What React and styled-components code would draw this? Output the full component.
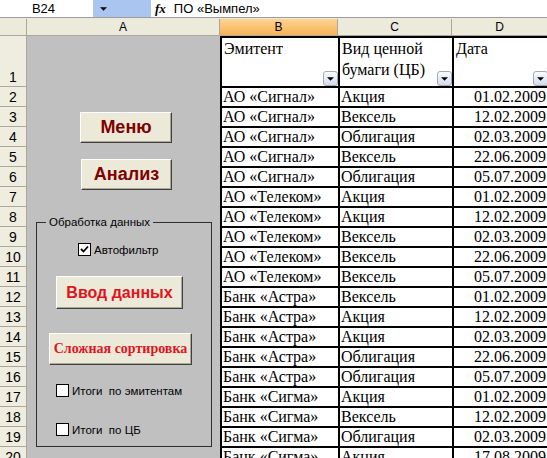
import React from 'react';
import styled, { createGlobalStyle } from 'styled-components';

const GlobalStyle = createGlobalStyle`
  html, body {
    margin: 0;
    padding: 0;
    background: #ffffff;
    overflow: hidden;
  }
  body {
    font-family: "Liberation Sans", Arial, sans-serif;
  }
`;

const Window = styled.div`
  width: 547px;
  height: 458px;
  overflow: hidden;
  background: #ece9d8;
`;

const FormulaBar = styled.div`
  display: flex;
  align-items: center;
  height: 17px;
  background: #ffffff;
  border-bottom: 1px solid #9d9da1;
  margin-bottom: 1px;
  font-size: 13px;
  color: #000;
`;

const NameBox = styled.div`
  width: 93px;
  height: 17px;
  display: flex;
  align-items: center;
  justify-content: center;
  padding-right: 6px;
  box-sizing: border-box;
`;

const NameDrop = styled.div`
  width: 58px;
  height: 17px;
  background: #a9c5f0;
  display: flex;
  align-items: center;
  padding-left: 7px;
  box-sizing: border-box;
`;

const Fx = styled.span`
  font-family: "Liberation Serif", "Times New Roman", serif;
  font-style: italic;
  font-weight: bold;
  font-size: 13px;
  margin: 0 8px 0 4px;
`;

const ColumnHeaders = styled.div`
  display: flex;
  height: 16px;
  border-bottom: 1px solid #aca899;
  background: #ebeadb;
`;

const ColHead = styled.div`
  width: ${(p) => p.$w}px;
  flex: none;
  box-sizing: border-box;
  border-right: 1px solid #aca899;
  display: flex;
  align-items: center;
  justify-content: center;
  font-size: 12px;
  color: #000;
  background: ${(p) => (p.$active ? 'linear-gradient(#fcd494, #f8b256)' : 'transparent')};
`;

const Body = styled.div`
  display: flex;
  height: 422px;
  overflow: hidden;
`;

const RowHeaders = styled.div`
  width: 27px;
  flex: none;
  display: flex;
  flex-direction: column;
  background: #efeddf;
  border-right: 1px solid #aca899;
  box-sizing: border-box;
`;

const RowNum = styled.div`
  height: ${(p) => p.$h}px;
  flex: none;
  box-sizing: border-box;
  border-bottom: 1px solid #aca899;
  display: flex;
  align-items: flex-end;
  justify-content: center;
  font-size: 14px;
  line-height: 18px;
  color: #000;
`;

const Panel = styled.div`
  width: 193px;
  flex: none;
  background: #c0c0c0;
  display: flex;
  flex-direction: column;
  align-items: flex-start;
`;

const Button = styled.div`
  width: ${(p) => p.$w}px;
  height: ${(p) => p.$h}px;
  margin: ${(p) => p.$mt}px 0 0 ${(p) => p.$ml}px;
  box-sizing: border-box;
  background: #ece9d8;
  border: 1px solid;
  border-color: #ffffff #404040 #404040 #ffffff;
  box-shadow: inset -1px -1px 0 #aca899;
  display: flex;
  align-items: center;
  justify-content: center;
  font-weight: bold;
  font-family: ${(p) => (p.$serif ? '"Liberation Serif", "Times New Roman", serif' : '"Liberation Sans", Arial, sans-serif')};
  font-size: ${(p) => p.$size}px;
  color: ${(p) => p.$color};
  white-space: nowrap;
`;

const Frame = styled.div`
  position: relative;
  width: 176px;
  height: 225px;
  margin: 32px 0 0 9px;
  box-sizing: border-box;
  border: 1px solid #303030;
  display: flex;
  flex-direction: column;
  align-items: flex-start;
`;

const Legend = styled.span`
  position: absolute;
  top: -8px;
  left: 9px;
  padding: 0 3px;
  background: #c0c0c0;
  font-size: 11.5px;
  line-height: 14px;
  color: #000;
`;

const CheckRow = styled.div`
  display: flex;
  align-items: center;
  margin: ${(p) => p.$mt}px 0 0 ${(p) => p.$ml}px;
  font-size: 11.5px;
  color: #000;
  white-space: pre;
`;

const Box = styled.div`
  width: 13px;
  height: 13px;
  box-sizing: border-box;
  background: #ffffff;
  border: 1px solid #000;
  margin-right: 3px;
  display: flex;
  align-items: center;
  justify-content: center;
`;

const Table = styled.div`
  display: grid;
  grid-template-columns: 118px 114px 96px;
  grid-template-rows: 50px;
  grid-auto-rows: 20px;
  border-top: 2px solid #000;
  border-left: 2px solid #000;
  background: #ffffff;
  align-self: flex-start;
`;

const Cell = styled.div`
  position: relative;
  box-sizing: border-box;
  border-right: 2px solid #000;
  border-bottom: 2px solid #000;
  font-family: "Liberation Serif", "Times New Roman", serif;
  font-size: 16px;
  line-height: 18px;
  color: #000;
  white-space: nowrap;
  overflow: hidden;
  display: flex;
  align-items: flex-end;
  justify-content: ${(p) => (p.$right ? 'flex-end' : 'flex-start')};
  padding: 0 2px 0 1px;
`;

const HeadCell = styled(Cell)`
  align-items: flex-start;
  white-space: normal;
  line-height: 21px;
  padding: 0 2px 0 2px;
  overflow: visible;
`;

const FilterBtn = styled.div`
  position: absolute;
  right: 0;
  bottom: 0;
  width: 15px;
  height: 15px;
  box-sizing: border-box;
  border: 1px solid #a3aab8;
  border-radius: 3px;
  background: linear-gradient(#fbfcfe, #d4dceb);
  display: flex;
  align-items: center;
  justify-content: center;
`;

const rows = [
  ['АО «Сигнал»', 'Акция', '01.02.2009'],
  ['АО «Сигнал»', 'Вексель', '12.02.2009'],
  ['АО «Сигнал»', 'Облигация', '02.03.2009'],
  ['АО «Сигнал»', 'Вексель', '22.06.2009'],
  ['АО «Сигнал»', 'Облигация', '05.07.2009'],
  ['АО «Телеком»', 'Акция', '01.02.2009'],
  ['АО «Телеком»', 'Акция', '12.02.2009'],
  ['АО «Телеком»', 'Вексель', '02.03.2009'],
  ['АО «Телеком»', 'Вексель', '22.06.2009'],
  ['АО «Телеком»', 'Вексель', '05.07.2009'],
  ['Банк «Астра»', 'Вексель', '01.02.2009'],
  ['Банк «Астра»', 'Акция', '12.02.2009'],
  ['Банк «Астра»', 'Акция', '02.03.2009'],
  ['Банк «Астра»', 'Облигация', '22.06.2009'],
  ['Банк «Астра»', 'Облигация', '05.07.2009'],
  ['Банк «Сигма»', 'Акция', '01.02.2009'],
  ['Банк «Сигма»', 'Вексель', '12.02.2009'],
  ['Банк «Сигма»', 'Облигация', '02.03.2009'],
  ['Банк «Сигма»', 'Акция', '17.08.2009'],
];

const Arrow = ({ size = 7 }) => (
  <svg width={size} height={Math.ceil(size / 2)} viewBox="0 0 8 4">
    <path d="M0 0 L8 0 L4 4 Z" fill="#000" />
  </svg>
);

const Check = () => (
  <svg width="9" height="9" viewBox="0 0 9 9">
    <path d="M1 4 L3.5 6.5 L8 1.5" stroke="#000" strokeWidth="1.8" fill="none" />
  </svg>
);

const Filter = () => (
  <FilterBtn>
    <Arrow />
  </FilterBtn>
);

export default function App() {
  return (
    <>
      <GlobalStyle />
      <Window>
        <FormulaBar>
          <NameBox>B24</NameBox>
          <NameDrop>
            <Arrow />
          </NameDrop>
          <Fx>fx</Fx>
          <span>ПО «Вымпел»</span>
        </FormulaBar>

        <ColumnHeaders>
          <ColHead $w={27} />
          <ColHead $w={193}>A</ColHead>
          <ColHead $w={118} $active>B</ColHead>
          <ColHead $w={114}>C</ColHead>
          <ColHead $w={96}>D</ColHead>
        </ColumnHeaders>

        <Body>
          <RowHeaders>
            <RowNum $h={51}>1</RowNum>
            {rows.map((_, i) => (
              <RowNum key={i} $h={20}>{i + 2}</RowNum>
            ))}
          </RowHeaders>

          <Panel>
            <Button $w={92} $h={31} $mt={76} $ml={53} $size={18} $color="#800000">
              Меню
            </Button>
            <Button $w={91} $h={31} $mt={16} $ml={54} $size={18} $color="#800000">
              Анализ
            </Button>

            <Frame>
              <Legend>Обработка данных</Legend>
              <CheckRow $mt={20} $ml={41}>
                <Box>
                  <Check />
                </Box>
                Автофильтр
              </CheckRow>
              <Button $w={127} $h={33} $mt={20} $ml={19} $size={16} $color="#e0141e">
                Ввод данных
              </Button>
              <Button $w={143} $h={32} $mt={24} $ml={12} $size={14} $color="#e0141e" $serif>
                Сложная сортировка
              </Button>
              <CheckRow $mt={19} $ml={19}>
                <Box />
                {'Итоги  по эмитентам'}
              </CheckRow>
              <CheckRow $mt={26} $ml={19}>
                <Box />
                {'Итоги  по ЦБ'}
              </CheckRow>
            </Frame>
          </Panel>

          <Table>
            <HeadCell>
              Эмитент
              <Filter />
            </HeadCell>
            <HeadCell>
              Вид ценной бумаги (ЦБ)
              <Filter />
            </HeadCell>
            <HeadCell>
              Дата
              <Filter />
            </HeadCell>
            {rows.map(([a, b, c], i) => (
              <React.Fragment key={i}>
                <Cell>{a}</Cell>
                <Cell>{b}</Cell>
                <Cell $right>{c}</Cell>
              </React.Fragment>
            ))}
          </Table>
        </Body>
      </Window>
    </>
  );
}
